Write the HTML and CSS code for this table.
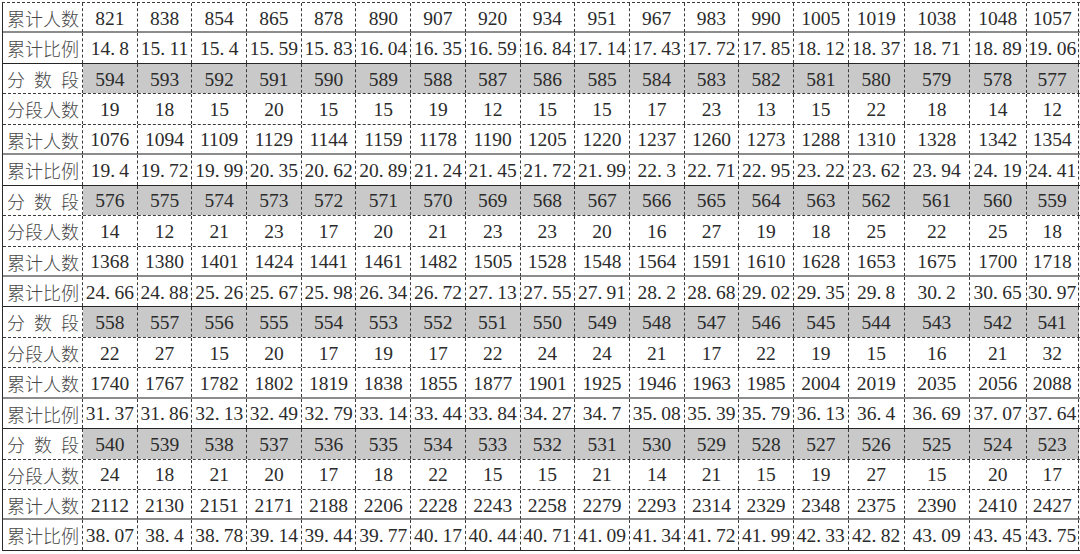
FILE: index.html
```html
<!DOCTYPE html>
<html lang="zh-CN">
<head>
<meta charset="utf-8">
<title>分数段统计表</title>
<link rel="stylesheet" href="styles.css">
</head>
<body>
<div class="sheet">
  <div class="row cum-n"><div class="lab">累计人数</div><div>821</div><div>838</div><div>854</div><div>865</div><div>878</div><div>890</div><div>907</div><div>920</div><div>934</div><div>951</div><div>967</div><div>983</div><div>990</div><div>1005</div><div>1019</div><div>1038</div><div>1048</div><div>1057</div></div>
  <div class="row cum-p"><div class="lab">累计比例</div><div>14<span class="d">.</span>8</div><div>15<span class="d">.</span>11</div><div>15<span class="d">.</span>4</div><div>15<span class="d">.</span>59</div><div>15<span class="d">.</span>83</div><div>16<span class="d">.</span>04</div><div>16<span class="d">.</span>35</div><div>16<span class="d">.</span>59</div><div>16<span class="d">.</span>84</div><div>17<span class="d">.</span>14</div><div>17<span class="d">.</span>43</div><div>17<span class="d">.</span>72</div><div>17<span class="d">.</span>85</div><div>18<span class="d">.</span>12</div><div>18<span class="d">.</span>37</div><div>18<span class="d">.</span>71</div><div>18<span class="d">.</span>89</div><div>19<span class="d">.</span>06</div></div>
  <div class="row score"><div class="lab">分 数 段</div><div>594</div><div>593</div><div>592</div><div>591</div><div>590</div><div>589</div><div>588</div><div>587</div><div>586</div><div>585</div><div>584</div><div>583</div><div>582</div><div>581</div><div>580</div><div>579</div><div>578</div><div>577</div></div>
  <div class="row seg"><div class="lab">分段人数</div><div>19</div><div>18</div><div>15</div><div>20</div><div>15</div><div>15</div><div>19</div><div>12</div><div>15</div><div>15</div><div>17</div><div>23</div><div>13</div><div>15</div><div>22</div><div>18</div><div>14</div><div>12</div></div>
  <div class="row cum-n"><div class="lab">累计人数</div><div>1076</div><div>1094</div><div>1109</div><div>1129</div><div>1144</div><div>1159</div><div>1178</div><div>1190</div><div>1205</div><div>1220</div><div>1237</div><div>1260</div><div>1273</div><div>1288</div><div>1310</div><div>1328</div><div>1342</div><div>1354</div></div>
  <div class="row cum-p"><div class="lab">累计比例</div><div>19<span class="d">.</span>4</div><div>19<span class="d">.</span>72</div><div>19<span class="d">.</span>99</div><div>20<span class="d">.</span>35</div><div>20<span class="d">.</span>62</div><div>20<span class="d">.</span>89</div><div>21<span class="d">.</span>24</div><div>21<span class="d">.</span>45</div><div>21<span class="d">.</span>72</div><div>21<span class="d">.</span>99</div><div>22<span class="d">.</span>3</div><div>22<span class="d">.</span>71</div><div>22<span class="d">.</span>95</div><div>23<span class="d">.</span>22</div><div>23<span class="d">.</span>62</div><div>23<span class="d">.</span>94</div><div>24<span class="d">.</span>19</div><div>24<span class="d">.</span>41</div></div>
  <div class="row score"><div class="lab">分 数 段</div><div>576</div><div>575</div><div>574</div><div>573</div><div>572</div><div>571</div><div>570</div><div>569</div><div>568</div><div>567</div><div>566</div><div>565</div><div>564</div><div>563</div><div>562</div><div>561</div><div>560</div><div>559</div></div>
  <div class="row seg"><div class="lab">分段人数</div><div>14</div><div>12</div><div>21</div><div>23</div><div>17</div><div>20</div><div>21</div><div>23</div><div>23</div><div>20</div><div>16</div><div>27</div><div>19</div><div>18</div><div>25</div><div>22</div><div>25</div><div>18</div></div>
  <div class="row cum-n"><div class="lab">累计人数</div><div>1368</div><div>1380</div><div>1401</div><div>1424</div><div>1441</div><div>1461</div><div>1482</div><div>1505</div><div>1528</div><div>1548</div><div>1564</div><div>1591</div><div>1610</div><div>1628</div><div>1653</div><div>1675</div><div>1700</div><div>1718</div></div>
  <div class="row cum-p"><div class="lab">累计比例</div><div>24<span class="d">.</span>66</div><div>24<span class="d">.</span>88</div><div>25<span class="d">.</span>26</div><div>25<span class="d">.</span>67</div><div>25<span class="d">.</span>98</div><div>26<span class="d">.</span>34</div><div>26<span class="d">.</span>72</div><div>27<span class="d">.</span>13</div><div>27<span class="d">.</span>55</div><div>27<span class="d">.</span>91</div><div>28<span class="d">.</span>2</div><div>28<span class="d">.</span>68</div><div>29<span class="d">.</span>02</div><div>29<span class="d">.</span>35</div><div>29<span class="d">.</span>8</div><div>30<span class="d">.</span>2</div><div>30<span class="d">.</span>65</div><div>30<span class="d">.</span>97</div></div>
  <div class="row score"><div class="lab">分 数 段</div><div>558</div><div>557</div><div>556</div><div>555</div><div>554</div><div>553</div><div>552</div><div>551</div><div>550</div><div>549</div><div>548</div><div>547</div><div>546</div><div>545</div><div>544</div><div>543</div><div>542</div><div>541</div></div>
  <div class="row seg"><div class="lab">分段人数</div><div>22</div><div>27</div><div>15</div><div>20</div><div>17</div><div>19</div><div>17</div><div>22</div><div>24</div><div>24</div><div>21</div><div>17</div><div>22</div><div>19</div><div>15</div><div>16</div><div>21</div><div>32</div></div>
  <div class="row cum-n"><div class="lab">累计人数</div><div>1740</div><div>1767</div><div>1782</div><div>1802</div><div>1819</div><div>1838</div><div>1855</div><div>1877</div><div>1901</div><div>1925</div><div>1946</div><div>1963</div><div>1985</div><div>2004</div><div>2019</div><div>2035</div><div>2056</div><div>2088</div></div>
  <div class="row cum-p"><div class="lab">累计比例</div><div>31<span class="d">.</span>37</div><div>31<span class="d">.</span>86</div><div>32<span class="d">.</span>13</div><div>32<span class="d">.</span>49</div><div>32<span class="d">.</span>79</div><div>33<span class="d">.</span>14</div><div>33<span class="d">.</span>44</div><div>33<span class="d">.</span>84</div><div>34<span class="d">.</span>27</div><div>34<span class="d">.</span>7</div><div>35<span class="d">.</span>08</div><div>35<span class="d">.</span>39</div><div>35<span class="d">.</span>79</div><div>36<span class="d">.</span>13</div><div>36<span class="d">.</span>4</div><div>36<span class="d">.</span>69</div><div>37<span class="d">.</span>07</div><div>37<span class="d">.</span>64</div></div>
  <div class="row score"><div class="lab">分 数 段</div><div>540</div><div>539</div><div>538</div><div>537</div><div>536</div><div>535</div><div>534</div><div>533</div><div>532</div><div>531</div><div>530</div><div>529</div><div>528</div><div>527</div><div>526</div><div>525</div><div>524</div><div>523</div></div>
  <div class="row seg"><div class="lab">分段人数</div><div>24</div><div>18</div><div>21</div><div>20</div><div>17</div><div>18</div><div>22</div><div>15</div><div>15</div><div>21</div><div>14</div><div>21</div><div>15</div><div>19</div><div>27</div><div>15</div><div>20</div><div>17</div></div>
  <div class="row cum-n"><div class="lab">累计人数</div><div>2112</div><div>2130</div><div>2151</div><div>2171</div><div>2188</div><div>2206</div><div>2228</div><div>2243</div><div>2258</div><div>2279</div><div>2293</div><div>2314</div><div>2329</div><div>2348</div><div>2375</div><div>2390</div><div>2410</div><div>2427</div></div>
  <div class="row cum-p"><div class="lab">累计比例</div><div>38<span class="d">.</span>07</div><div>38<span class="d">.</span>4</div><div>38<span class="d">.</span>78</div><div>39<span class="d">.</span>14</div><div>39<span class="d">.</span>44</div><div>39<span class="d">.</span>77</div><div>40<span class="d">.</span>17</div><div>40<span class="d">.</span>44</div><div>40<span class="d">.</span>71</div><div>41<span class="d">.</span>09</div><div>41<span class="d">.</span>34</div><div>41<span class="d">.</span>72</div><div>41<span class="d">.</span>99</div><div>42<span class="d">.</span>33</div><div>42<span class="d">.</span>82</div><div>43<span class="d">.</span>09</div><div>43<span class="d">.</span>45</div><div>43<span class="d">.</span>75</div></div>
</div>
</body>
</html>
```
FILE: styles.css
```css
html, body {
  margin: 0;
  padding: 0;
  background: #ffffff;
}

.sheet {
  margin: 2px 0 0 2px;
  width: 1077px;
  border-top: 1px dashed #3a3a3a;
  border-left: 1px solid #2a2a2a;
  font-family: "Liberation Serif", "Noto Sans CJK SC", serif;
  font-size: 19.5px;
  color: #2b2b2b;
}

.row {
  display: grid;
  grid-template-columns: 80px repeat(14, 54.7px) 56px 65px 57px 52px;
  height: 30.44px;
  box-sizing: border-box;
  border-bottom: 1px dashed #3a3a3a;
}

.row > div {
  box-sizing: border-box;
  border-right: 1px dashed #3a3a3a;
  display: flex;
  align-items: center;
  justify-content: center;
  white-space: nowrap;
  padding-top: 2px;
}

.row > .lab {
  display: block;
  font-family: "Noto Sans CJK SC", sans-serif;
  font-weight: 300;
  font-size: 18px;
  line-height: 28px;
  padding: 1px 3px 0 4px;
  text-align: justify;
  text-align-last: justify;
  color: #484848;
}

.row.cum-n {
  border-bottom: 2px solid #8c8c8c;
}

.row.cum-p {
  border-bottom: 1px solid #262626;
}

.row.score > div:not(.lab) {
  background: #c9c9c9;
}

.d {
  padding-right: 0.22em;
}
```
